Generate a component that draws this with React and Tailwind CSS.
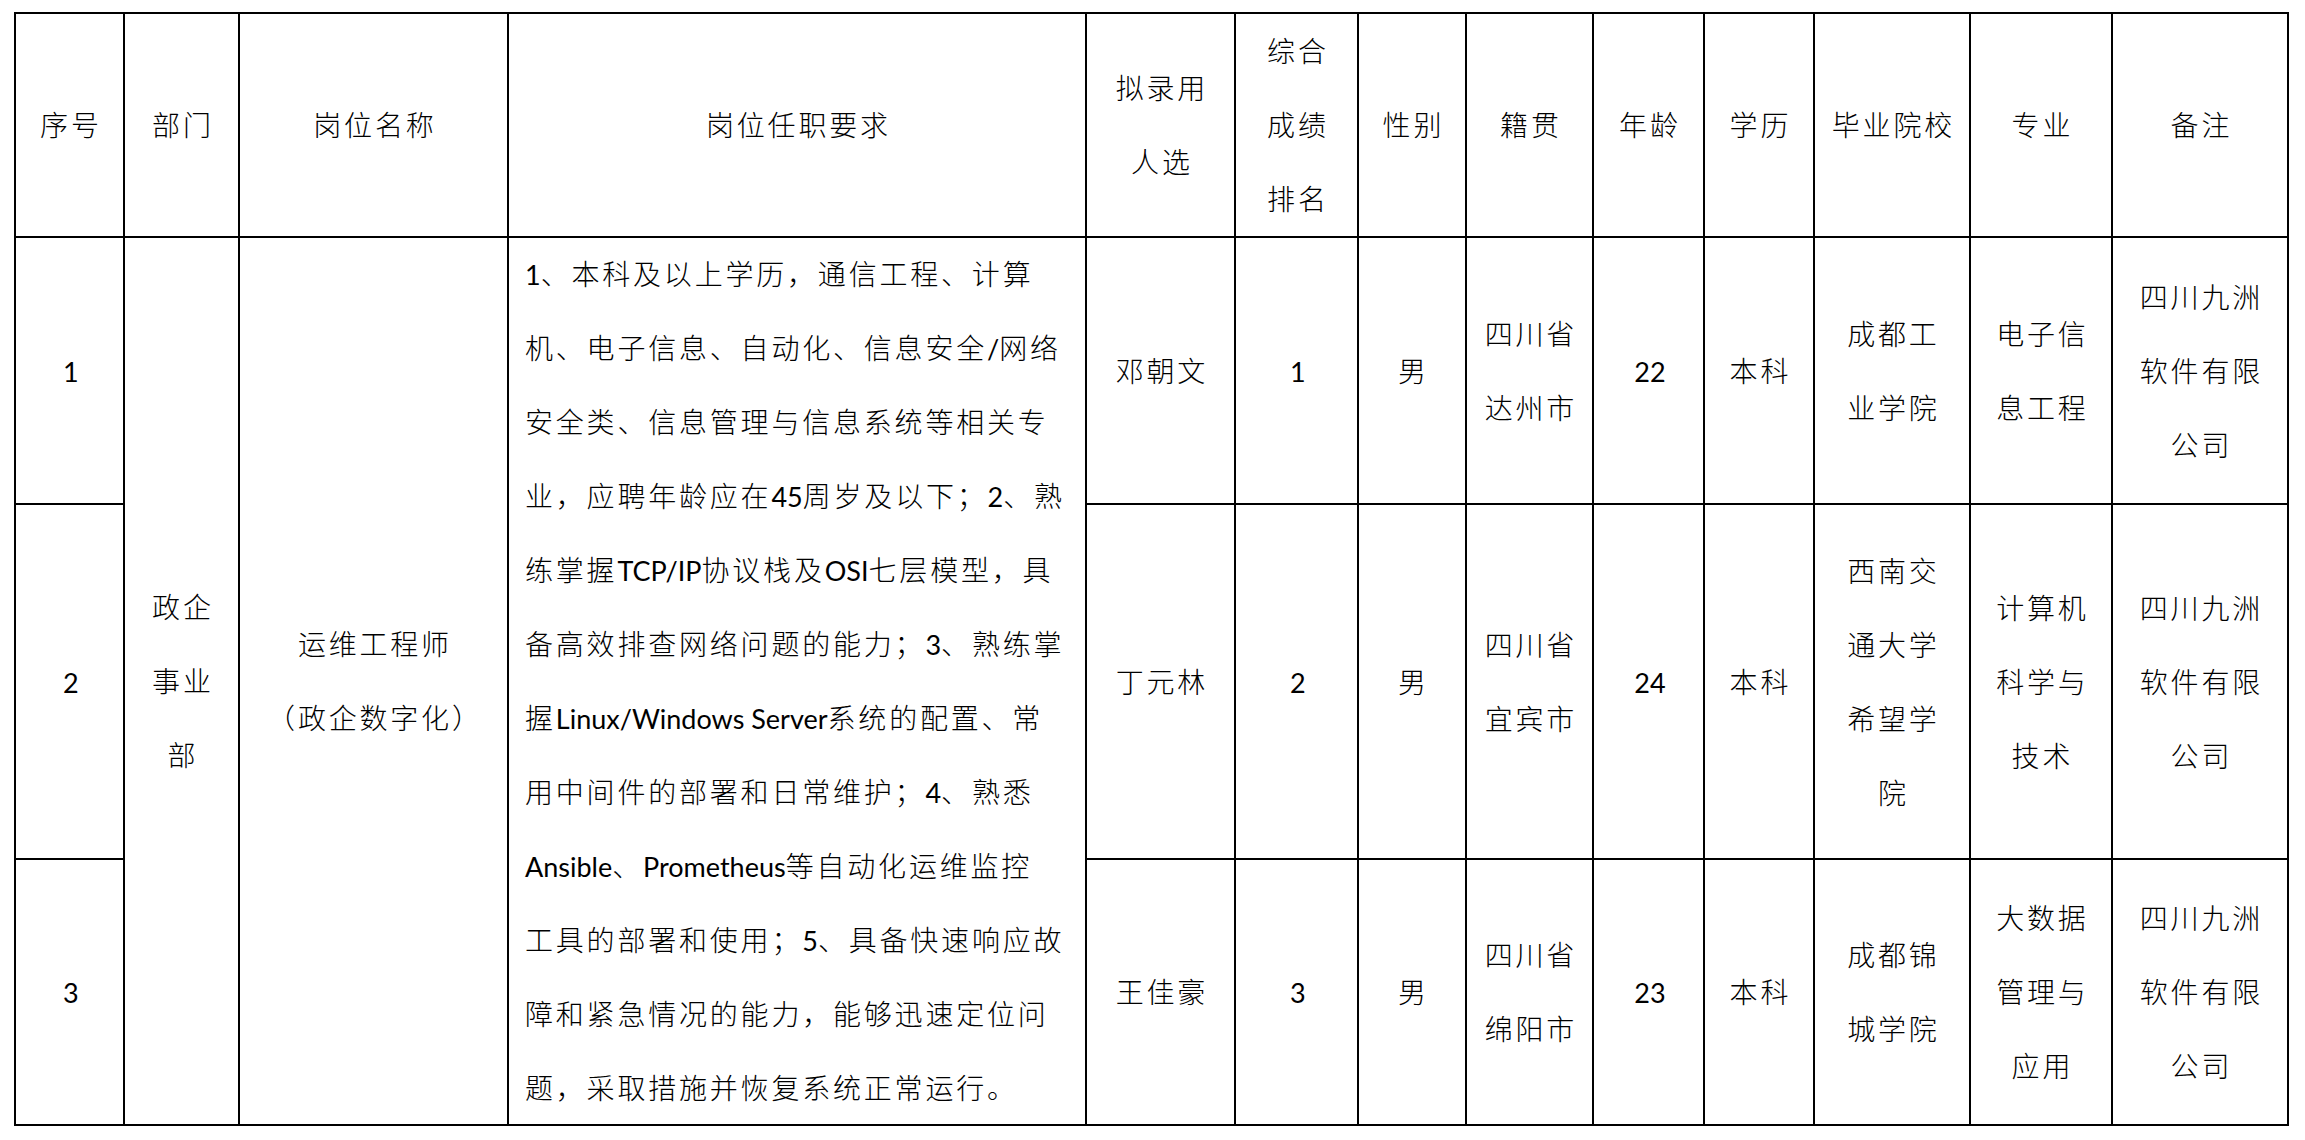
import React from "react";

const L = (s) => <span className="tracking-normal text-[27px] font-normal">{s}</span>;

function Cell({ lines, className = "" }) {
  return (
    <div className={"bg-white flex flex-col items-center justify-center pl-[2.8px] " + className}>
      {lines.map((l, i) => (
        <div key={i} className="h-[74px] leading-[74px] whitespace-nowrap">
          {l}
        </div>
      ))}
    </div>
  );
}

const P = ({ children }) => <span className="[font-feature-settings:'halt']">{children}</span>;

const req = [
  <>{L("1")}、本科及以上学历，通信工程、计算</>,
  <>机、电子信息、自动化、信息安全{L("/")}网络</>,
  <>安全类、信息管理与信息系统等相关专</>,
  <>业，应聘年龄应在{L("45")}周岁及以下；{L("2")}、熟</>,
  <>练掌握{L("TCP/IP")}协议栈及{L("OSI")}七层模型，具</>,
  <>备高效排查网络问题的能力；{L("3")}、熟练掌</>,
  <>握{L("Linux/Windows Server")}系统的配置、常</>,
  <>用中间件的部署和日常维护；{L("4")}、熟悉</>,
  <>{L("Ansible")}、{L("Prometheus")}等自动化运维监控</>,
  <>工具的部署和使用；{L("5")}、具备快速响应故</>,
  <>障和紧急情况的能力，能够迅速定位问</>,
  <>题，采取措施并恢复系统正常运行。</>,
];

const company = ["四川九洲", "软件有限", "公司"];

const rows = [
  {
    no: "1",
    name: ["邓朝文"],
    rank: "1",
    place: ["四川省", "达州市"],
    age: "22",
    school: ["成都工", "业学院"],
    major: ["电子信", "息工程"],
  },
  {
    no: "2",
    name: ["丁元林"],
    rank: "2",
    place: ["四川省", "宜宾市"],
    age: "24",
    school: ["西南交", "通大学", "希望学", "院"],
    major: ["计算机", "科学与", "技术"],
  },
  {
    no: "3",
    name: ["王佳豪"],
    rank: "3",
    place: ["四川省", "绵阳市"],
    age: "23",
    school: ["成都锦", "城学院"],
    major: ["大数据", "管理与", "应用"],
  },
];

export default function App() {
  return (
    <div className="w-[2305px] h-[1140px] bg-white overflow-hidden pt-[12px] pl-[14px] text-black text-[28px] tracking-[2.8px] font-light font-['Lato','Noto_Sans_CJK_SC',sans-serif]">
      <div className="grid w-fit bg-black p-[2px] gap-[2px] grid-cols-[107px_113px_267px_576px_147px_121px_106px_125px_109px_108px_154px_140px_174px] grid-rows-[222px_265px_353px_264px]">
        <Cell lines={["序号"]} />
        <Cell lines={["部门"]} />
        <Cell lines={["岗位名称"]} />
        <Cell lines={["岗位任职要求"]} />
        <Cell lines={["拟录用", "人选"]} />
        <Cell lines={["综合", "成绩", "排名"]} />
        <Cell lines={["性别"]} />
        <Cell lines={["籍贯"]} />
        <Cell lines={["年龄"]} />
        <Cell lines={["学历"]} />
        <Cell lines={["毕业院校"]} />
        <Cell lines={["专业"]} />
        <Cell lines={["备注"]} />

        {rows.map((r, i) => (
          <React.Fragment key={i}>
            <Cell lines={[L(r.no)]} />
            {i === 0 && (
              <>
                <Cell className="row-span-3" lines={["政企", "事业", "部"]} />
                <Cell
                  className="row-span-3"
                  lines={["运维工程师", <><P>（</P>政企数字化<P>）</P></>]}
                />
                <div className="row-span-3 bg-white flex flex-col justify-center items-start pl-[16px]">
                  {req.map((l, j) => (
                    <div key={j} className="h-[74px] leading-[74px] whitespace-nowrap">
                      {l}
                    </div>
                  ))}
                </div>
              </>
            )}
            <Cell lines={r.name} />
            <Cell lines={[L(r.rank)]} />
            <Cell lines={["男"]} />
            <Cell lines={r.place} />
            <Cell lines={[L(r.age)]} />
            <Cell lines={["本科"]} />
            <Cell lines={r.school} />
            <Cell lines={r.major} />
            <Cell lines={company} />
          </React.Fragment>
        ))}
      </div>
    </div>
  );
}
